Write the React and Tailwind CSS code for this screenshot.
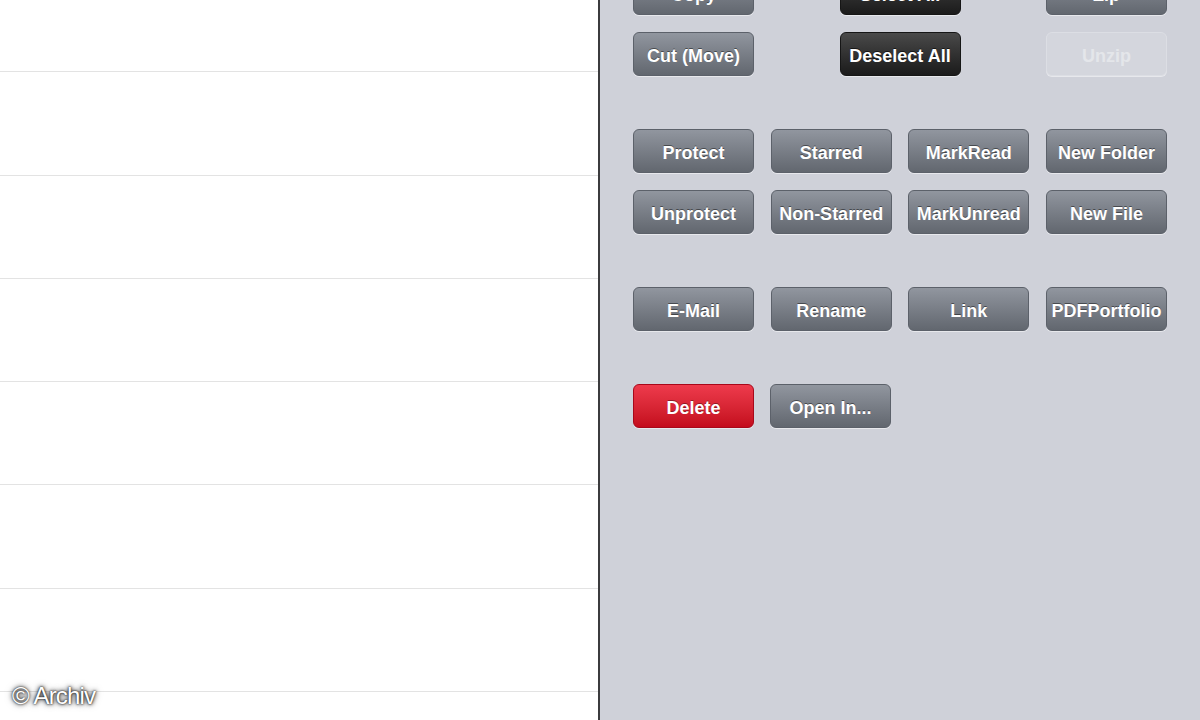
import React from 'react';

const FONT = { fontFamily: '"Liberation Sans", Arial, sans-serif' };

const VARIANTS = {
  gray: 'bg-gradient-to-b from-[#91969f] to-[#62676f] border-[#5c616a] text-white [text-shadow:0_-1px_0_rgba(0,0,0,0.45)]',
  dark: 'bg-gradient-to-b from-[#4a4a4a] to-[#1b1b1b] border-[#161616] text-white [text-shadow:0_-1px_0_rgba(0,0,0,0.6)]',
  red: 'bg-gradient-to-b from-[#ee3a4c] to-[#c40a1c] border-[#a8081a] text-white [text-shadow:0_-1px_0_rgba(0,0,0,0.35)]',
  disabled: 'bg-[#d4d6dd] border-[#dcdee4] text-[#e4e6ea]',
};

function Btn({ label, variant = 'gray' }) {
  return (
    <button
      className={`w-[121px] h-[44px] pt-[3px] rounded-[6px] border text-[18px] font-bold leading-none whitespace-nowrap shadow-[0_1px_0_rgba(255,255,255,0.5)] ${VARIANTS[variant]}`}
      style={FONT}
    >
      {label}
    </button>
  );
}

const ROWS = [0, 1, 2, 3, 4, 5, 6, 7];

export default function App() {
  return (
    <div className="w-[1200px] h-[720px] flex overflow-hidden bg-white" style={FONT}>
      {/* file list */}
      <div className="relative w-[598px] h-full bg-white overflow-hidden">
        <div className="-mt-[31px]">
          {ROWS.map((r) => (
            <div key={r} className="h-[103.3px] border-b border-[#e3e3e3]" />
          ))}
        </div>
        <div className="absolute left-[12px] top-[684px] text-[24px] leading-none text-white tracking-[-0.8px] [text-shadow:0_0_2px_rgba(0,0,0,1),0_0_4px_rgba(0,0,0,0.8),0_0_7px_rgba(0,0,0,0.5)]">
          © Archiv
        </div>
      </div>

      {/* divider */}
      <div className="w-[2px] h-full bg-[#3b3b3d]" />

      {/* action panel */}
      <div className="flex-1 h-full bg-[#cfd1d9] pl-[33px] pr-[33px]">
        <div className="-mt-[29px] w-[534px] flex flex-col gap-[17px]">
          <div className="flex justify-between">
            <Btn label="Copy" />
            <Btn label="Select All" variant="dark" />
            <Btn label="Zip" />
          </div>
          <div className="flex justify-between">
            <Btn label="Cut (Move)" />
            <Btn label="Deselect All" variant="dark" />
            <Btn label="Unzip" variant="disabled" />
          </div>
        </div>

        <div className="mt-[53px] w-[534px] grid grid-cols-[121px_121px_121px_121px] justify-between gap-y-[17px]">
          <Btn label="Protect" />
          <Btn label="Starred" />
          <Btn label="MarkRead" />
          <Btn label="New Folder" />
          <Btn label="Unprotect" />
          <Btn label="Non-Starred" />
          <Btn label="MarkUnread" />
          <Btn label="New File" />
        </div>

        <div className="mt-[53px] w-[534px] grid grid-cols-[121px_121px_121px_121px] justify-between">
          <Btn label="E-Mail" />
          <Btn label="Rename" />
          <Btn label="Link" />
          <Btn label="PDFPortfolio" />
        </div>

        <div className="mt-[53px] w-[534px] flex gap-[16px]">
          <Btn label="Delete" variant="red" />
          <Btn label="Open In..." />
        </div>
      </div>
    </div>
  );
}
